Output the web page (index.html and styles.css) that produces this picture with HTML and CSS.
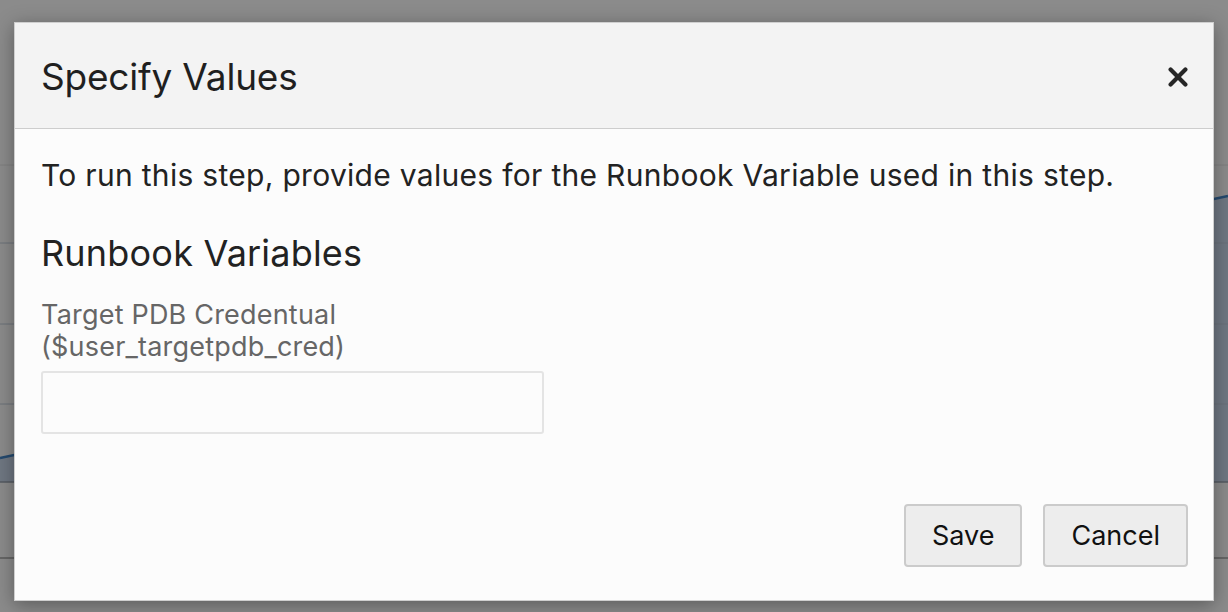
FILE: index.html
```html
<!DOCTYPE html>
<html lang="en">
<head>
<meta charset="utf-8">
<title>Specify Values</title>
<link rel="stylesheet" href="styles.css">
</head>
<body>
<div class="backdrop">
  <svg class="chart" width="1228" height="612" viewBox="0 0 1228 612" xmlns="http://www.w3.org/2000/svg">
    <rect x="0" y="0" width="1228" height="612" fill="#8b8b8b"/>
    <polygon points="0,458 1228,196 1228,482 0,482" fill="#6f7782"/>
    <line x1="0" y1="165" x2="1228" y2="165" stroke="#7f7f7f" stroke-width="1"/>
    <line x1="0" y1="243" x2="1228" y2="243" stroke="#6a7079" stroke-width="1"/>
    <line x1="0" y1="324" x2="1228" y2="324" stroke="#6a7079" stroke-width="1"/>
    <line x1="0" y1="404" x2="1228" y2="404" stroke="#6a7079" stroke-width="1"/>
    <polyline points="0,458 1228,196" fill="none" stroke="#24496e" stroke-width="2.5"/>
    <line x1="0" y1="482" x2="1228" y2="482" stroke="#555a60" stroke-width="1.5"/>
    <line x1="0" y1="558" x2="1228" y2="558" stroke="#5a5a5a" stroke-width="1.5"/>
  </svg>
</div>

<div class="dialog" role="dialog" aria-labelledby="dlg-title">
  <div class="dialog-header">
    <h1 class="dialog-title" id="dlg-title">Specify Values</h1>
    <button class="close-btn" aria-label="Close">
      <svg width="20" height="20" viewBox="0 0 20 20" xmlns="http://www.w3.org/2000/svg">
        <line x1="2.6" y1="2.6" x2="17.4" y2="17.4" stroke="#262626" stroke-width="4.2" stroke-linecap="round"/>
        <line x1="17.4" y1="2.6" x2="2.6" y2="17.4" stroke="#262626" stroke-width="4.2" stroke-linecap="round"/>
      </svg>
    </button>
  </div>
  <div class="dialog-body">
    <p class="intro">To run this step, provide values for the Runbook Variable used in this step.</p>
    <h2 class="section-title">Runbook Variables</h2>
    <label class="field-label" for="cred">Target PDB Credentual<br>($user_targetpdb_cred)</label>
    <input class="field-input" id="cred" type="text">
  </div>
  <div class="dialog-footer">
    <button class="btn">Save</button>
    <button class="btn">Cancel</button>
  </div>
</div>
</body>
</html>
```

FILE: styles.css
```css
* { box-sizing: border-box; }

html, body {
  margin: 0;
  padding: 0;
  width: 1228px;
  height: 612px;
  overflow: hidden;
  font-family: Inter, "Liberation Sans", sans-serif;
}

.backdrop {
  position: absolute;
  left: 0;
  top: 0;
  width: 1228px;
  height: 612px;
}

.chart { display: block; }

.dialog {
  position: absolute;
  left: 14px;
  top: 22px;
  width: 1200px;
  height: 579px;
  background: #fcfcfc;
  border: 1px solid #cfcfcf;
  box-shadow: 0 4px 18px rgba(0, 0, 0, 0.35);
  display: flex;
  flex-direction: column;
}

.dialog-header {
  height: 106px;
  flex: 0 0 106px;
  background: #f3f3f3;
  border-bottom: 1px solid #cdcdcd;
  display: flex;
  align-items: center;
  justify-content: space-between;
  padding: 2px 25px 0 26px;
}

.dialog-title {
  margin: 0;
  font-size: 37px;
  font-weight: 400;
  color: #1f1f1f;
  letter-spacing: -0.2px;
}

.close-btn {
  border: 0;
  background: transparent;
  padding: 0;
  width: 20px;
  height: 20px;
  display: flex;
}

.dialog-body {
  flex: 1;
  padding: 28px 26px 0 26px;
  display: flex;
  flex-direction: column;
  align-items: flex-start;
}

.intro {
  margin: 0;
  font-size: 30px;
  line-height: 36px;
  letter-spacing: 0.3px;
  color: #222;
}

.section-title {
  margin: 40px 0 0 0;
  font-size: 36px;
  line-height: 40px;
  font-weight: 400;
  letter-spacing: 0.2px;
  color: #222;
}

.field-label {
  margin-top: 26px;
  font-size: 27px;
  line-height: 32px;
  letter-spacing: 0.2px;
  color: #666;
}

.field-input {
  margin-top: 8px;
  width: 503px;
  height: 63px;
  border: 2px solid #e4e4e4;
  border-radius: 3px;
  background: #fcfcfc;
  font: inherit;
}

.dialog-footer {
  display: flex;
  justify-content: flex-end;
  gap: 21px;
  padding: 0 25px 33px 0;
}

.btn {
  height: 63px;
  padding: 0 26px;
  background: #ededed;
  border: 2px solid #cbcbcb;
  border-radius: 4px;
  font-family: Inter, "Liberation Sans", sans-serif;
  font-size: 27px;
  color: #111;
}
```
